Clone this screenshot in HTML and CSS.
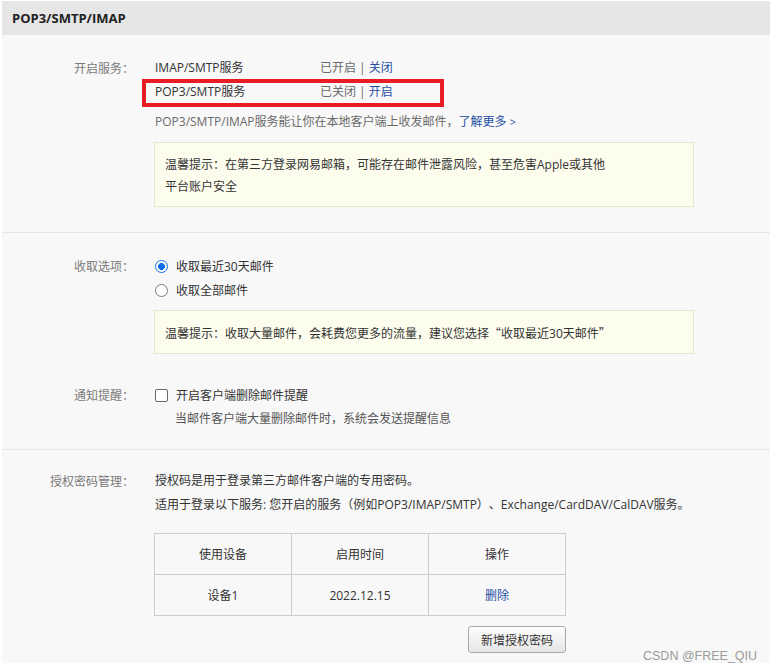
FILE: index.html
```html
<!DOCTYPE html>
<html lang="zh-CN">
<head>
<meta charset="utf-8">
<title>POP3/SMTP/IMAP</title>
<link rel="stylesheet" href="styles.css">
</head>
<body>
<div class="panel">
  <div class="panel-head">POP3/SMTP/IMAP</div>

  <section class="sec sec-service">
    <div class="field">
      <div class="label">开启服务：</div>
      <div class="content">
        <div class="svc">
          <span class="svc-name">IMAP/SMTP服务</span>
          <span class="svc-status">已开启 | <a class="link" href="#">关闭</a></span>
        </div>
        <div class="svc svc-marked">
          <span class="svc-name">POP3/SMTP服务</span>
          <span class="svc-status">已关闭 | <a class="link" href="#">开启</a></span>
        </div>
        <p class="desc">POP3/SMTP/IMAP服务能让你在本地客户端上收发邮件，<a class="link" href="#">了解更多</a> <span class="arrow">&gt;</span></p>
        <div class="tip">温馨提示：在第三方登录网易邮箱，可能存在邮件泄露风险，甚至危害Apple或其他<br>平台账户安全</div>
      </div>
    </div>
  </section>

  <section class="sec sec-receive">
    <div class="field">
      <div class="label">收取选项：</div>
      <div class="content">
        <label class="opt"><input type="radio" name="recv" checked><span>收取最近30天邮件</span></label>
        <label class="opt"><input type="radio" name="recv"><span>收取全部邮件</span></label>
        <div class="tip tip-one">温馨提示：收取大量邮件，会耗费您更多的流量，建议您选择<span class="cjk">“</span>收取最近30天邮件<span class="cjk">”</span></div>
      </div>
    </div>
    <div class="field field-notify">
      <div class="label">通知提醒：</div>
      <div class="content">
        <label class="opt"><input type="checkbox"><span>开启客户端删除邮件提醒</span></label>
        <p class="sub">当邮件客户端大量删除邮件时，系统会发送提醒信息</p>
      </div>
    </div>
  </section>

  <section class="sec sec-auth">
    <div class="field">
      <div class="label">授权密码管理：</div>
      <div class="content">
        <p class="line">授权码是用于登录第三方邮件客户端的专用密码。</p>
        <p class="line">适用于登录以下服务: 您开启的服务（例如POP3/IMAP/SMTP）、Exchange/CardDAV/CalDAV服务。</p>
        <div class="auth-box">
          <table class="auth-table">
            <thead>
              <tr><th>使用设备</th><th>启用时间</th><th>操作</th></tr>
            </thead>
            <tbody>
              <tr><td>设备1</td><td>2022.12.15</td><td><a class="link" href="#">删除</a></td></tr>
            </tbody>
          </table>
          <button class="btn" type="button">新增授权密码</button>
        </div>
      </div>
    </div>
  </section>
</div>
<div class="watermark">CSDN @FREE_QIU</div>
</body>
</html>
```

FILE: styles.css
```css
html, body {
  margin: 0;
  padding: 0;
  background: #ffffff;
  overflow: hidden;
}

body {
  font-family: "Open Sans", "Noto Sans CJK SC", sans-serif;
  font-size: 12px;
  color: #333333;
  height: 669px;
  position: relative;
  text-spacing-trim: space-all;
}

p { margin: 0; }

.cjk {
  font-family: "Noto Sans CJK SC", sans-serif;
}

.panel {
  margin: 1px 0 0 2px;
  background: #f8f8f8;
}

.panel-head {
  height: 34px;
  line-height: 34px;
  padding-left: 10px;
  background: #e6e6e6;
  font-weight: 700;
  font-size: 13px;
  color: #222222;
}

.sec {
  border-bottom: 1px solid #e6e6e6;
}

.sec-service { padding: 21px 0 25px; }
.sec-receive { padding: 21px 0 19px; }
.sec-auth { padding: 19px 0 10px; border-bottom: none; }

.field {
  display: grid;
  grid-template-columns: 132px 1fr;
  column-gap: 20px;
}

.field-notify { margin-top: 29px; }

.label {
  text-align: right;
  line-height: 24px;
  padding-top: 1px;
  color: #7a7a7a;
}

.content {
  line-height: 24px;
}

.svc {
  display: flex;
  height: 24px;
  padding-left: 1px;
  align-items: flex-end;
}

.svc-name {
  width: 165px;
  color: #333333;
}

.svc-status {
  color: #6a6a6a;
}

.svc-marked {
  position: relative;
}

.svc-marked::after {
  content: "";
  position: absolute;
  left: -12px;
  top: -1px;
  width: 294px;
  height: 20px;
  border: 4px solid #e81c24;
}

.link {
  color: #1e4fa3;
  text-decoration: none;
}

.desc {
  margin-top: 6px;
  padding-left: 1px;
  color: #6a6a6a;
}

.arrow {
  color: #1e4fa3;
  font-size: 11px;
}

.tip {
  margin-top: 8px;
  width: 518px;
  padding: 11px 10px 8px;
  line-height: 22px;
  background: #fdfdee;
  border: 1px solid #e7e7cf;
  color: #333333;
}

.opt {
  display: flex;
  align-items: center;
  height: 24px;
  color: #333333;
}

.opt span {
  padding-top: 1px;
}

.opt input {
  appearance: none;
  -webkit-appearance: none;
  margin: 0 8px 0 1px;
  width: 13px;
  height: 13px;
  background: #ffffff;
  border: 1px solid #7a7a7a;
  box-sizing: border-box;
}

.opt input[type="radio"] {
  border-radius: 50%;
}

.opt input[type="radio"]:checked {
  border: 1.5px solid #0f6fe8;
  background: radial-gradient(circle, #0f6fe8 0 3.2px, #ffffff 3.7px);
}

.opt input[type="checkbox"] {
  border-radius: 2px;
  border-color: #6a6a6a;
}

.sub {
  padding-left: 21px;
  padding-top: 1px;
  line-height: 22px;
  color: #555555;
}

.line {
  padding-left: 1px;
  color: #333333;
}

.auth-box {
  display: inline-flex;
  flex-direction: column;
  align-items: flex-end;
  margin-top: 16px;
}

.auth-table {
  border-collapse: collapse;
  width: 412px;
  table-layout: fixed;
}

.auth-table th,
.auth-table td {
  height: 38px;
  padding: 2px 0 0;
  border: 1px solid #cccccc;
  text-align: center;
  font-weight: 400;
  color: #333333;
  line-height: 20px;
}

.btn {
  margin-top: 10px;
  width: 98px;
  height: 27px;
  padding: 0;
  font-family: inherit;
  font-size: 12px;
  color: #333333;
  background: linear-gradient(#fdfdfd, #e6e6e6);
  border: 1px solid #a9a9a9;
  border-radius: 3px;
}

.watermark {
  position: absolute;
  left: 643px;
  top: 648px;
  font-family: "Liberation Sans", Arial, sans-serif;
  font-size: 12.5px;
  line-height: 16px;
  color: #9a9a9a;
}
```
